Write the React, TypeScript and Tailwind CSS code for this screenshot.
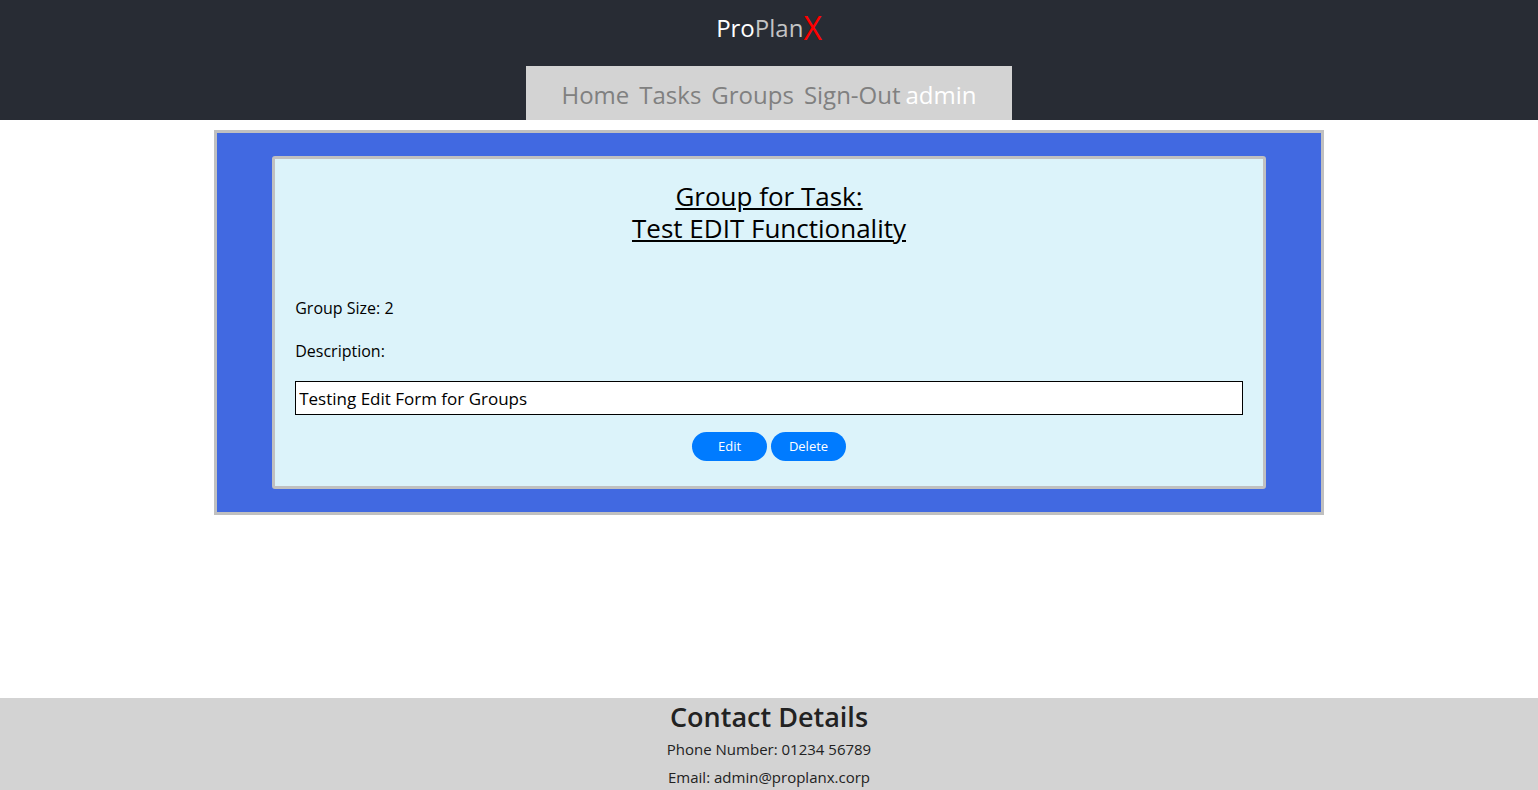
import React from 'react';

const font = { fontFamily: '"Open Sans", "Noto Sans", sans-serif' };

function Header() {
  return (
    <div className="bg-[#282c34] h-[120px] flex flex-col items-center">
      <div className="h-[66px] flex items-center justify-center pb-[10px]">
        <span className="text-[24px] leading-none text-white">Pro</span>
        <span className="text-[24px] leading-none text-[#c4c4c4]">Plan</span>
        <span className="text-[32px] leading-none text-[#ff0000]">X</span>
      </div>
      <nav className="bg-[#d3d3d3] w-[486px] h-[54px] pt-[4px] flex items-center justify-center text-[24px] text-[#808080]">
        <span className="mr-[10px]">Home</span>
        <span className="mr-[10px]">Tasks</span>
        <span className="mr-[10px]">Groups</span>
        <span className="mr-[5px]">Sign-Out</span>
        <span className="text-white">admin</span>
      </nav>
    </div>
  );
}

function GroupCard() {
  return (
    <div className="w-[1110px] mx-auto mt-[10px] bg-[#4169e1] border-[3px] border-[#c0c0c0] py-[23px]">
      <div className="w-[90%] mx-auto bg-[#dcf3fa] border-[3px] border-[#c0c0c0] rounded-[3px] px-[20px] pt-[21px] pb-[25px]">
        <h2 className="text-center text-[26px] leading-[32px] text-black underline font-medium">
          Group for Task:
          <br />
          Test EDIT Functionality
        </h2>
        <p className="mt-[52px] text-[16px] leading-[24px] text-black">Group Size: 2</p>
        <p className="mt-[19px] text-[16px] leading-[24px] text-black">Description:</p>
        <input
          readOnly
          value="Testing Edit Form for Groups"
          className="mt-[18px] w-full h-[34px] border border-black bg-white px-[3px] text-[17px] text-black outline-none"
          style={font}
        />
        <div className="mt-[17px] flex justify-center gap-[4px]">
          <button className="w-[75px] h-[29px] rounded-full bg-[#007bff] text-white text-[13px]">Edit</button>
          <button className="w-[75px] h-[29px] rounded-full bg-[#007bff] text-white text-[13px]">Delete</button>
        </div>
      </div>
    </div>
  );
}

function Footer() {
  return (
    <div className="bg-[#d3d3d3] mt-[183px] pt-[1px] pb-[20px] text-center text-[#222]">
      <h3 className="text-[27px] leading-[36px] font-semibold">Contact Details</h3>
      <p className="text-[15px] leading-[28px]">Phone Number: 01234 56789</p>
      <p className="text-[15px] leading-[28px]">Email: admin@proplanx.corp</p>
    </div>
  );
}

export default function App() {
  return (
    <div className="min-h-screen bg-white" style={font}>
      <Header />
      <GroupCard />
      <Footer />
    </div>
  );
}
